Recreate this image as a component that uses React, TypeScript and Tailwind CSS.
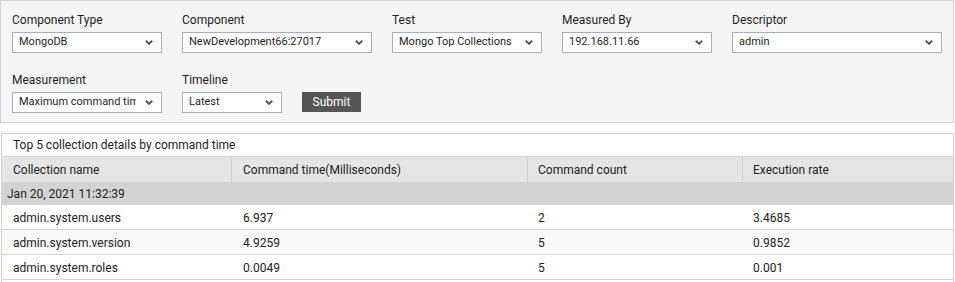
import React from "react";

const font = { fontFamily: "Roboto, 'Liberation Sans', sans-serif" };

function Chevron() {
  return (
    <svg width="8" height="5" viewBox="0 0 8 5" className="shrink-0">
      <path d="M0.8 0.8 L4 3.8 L7.2 0.8" fill="none" stroke="#555" strokeWidth="1.9" />
    </svg>
  );
}

function Select({ value, width }: { value: string; width: string }) {
  return (
    <div
      className={`${width} h-[21px] bg-white border border-[#a9afb9] flex items-center pl-[6px] pr-[8px] text-[11px] text-[#1e1e1e]`}
    >
      <div className="flex-1 min-w-0 overflow-hidden whitespace-nowrap mr-[9px]">{value}</div>
      <Chevron />
    </div>
  );
}

function Field({ label, value, width }: { label: string; value: string; width: string }) {
  return (
    <div className="flex flex-col mr-[20px]">
      <div className="h-[16px] leading-[16px] text-[12px] text-[#1e1e1e] mb-[4px]">{label}</div>
      <Select value={value} width={width} />
    </div>
  );
}

const rows = [
  ["admin.system.users", "6.937", "2", "3.4685"],
  ["admin.system.version", "4.9259", "5", "0.9852"],
  ["admin.system.roles", "0.0049", "5", "0.001"],
];

const cols = "grid grid-cols-[230px_296px_215px_1fr]";
const pads = ["pl-[11px]", "pl-[11px]", "pl-[10px]", "pl-[10px]"];

export default function App() {
  return (
    <div className="w-[955px] h-[282px] overflow-hidden bg-white text-[#222]" style={font}>
      <div className="w-[954px] h-[123px] border border-[#d4d4d4] bg-[#f5f5f5] pt-[11px] pl-[11px]">
        <div className="flex">
          <Field label="Component Type" value="MongoDB" width="w-[150px]" />
          <Field label="Component" value="NewDevelopment66:27017" width="w-[190px]" />
          <Field label="Test" value="Mongo Top Collections" width="w-[150px]" />
          <Field label="Measured By" value="192.168.11.66" width="w-[150px]" />
          <Field label="Descriptor" value="admin" width="w-[210px]" />
        </div>
        <div className="flex mt-[19px] items-end">
          <Field label="Measurement" value="Maximum command time" width="w-[150px]" />
          <Field label="Timeline" value="Latest" width="w-[100px]" />
          <button className="w-[59px] h-[20px] mb-[1px] bg-[#555555] text-white text-[12px] leading-[20px] text-center">
            Submit
          </button>
        </div>
      </div>

      <div className="ml-[1px] mt-[10px] w-[953px] border border-[#d2d2d2] text-[12px] text-[#222] pb-[10px]">
        <div className="h-[22px] leading-[22px] pl-[11px] bg-white">Top 5 collection details by command time</div>
        <div className={`${cols} h-[26px] bg-[#e5e5e5] border-t border-[#d6d6d6]`}>
          {["Collection name", "Command time(Milliseconds)", "Command count", "Execution rate"].map((h, i) => (
            <div
              key={h}
              className={`${pads[i]} pt-[1px] leading-[25px] ${i < 3 ? "border-r border-[#cfcfcf]" : ""}`}
            >
              {h}
            </div>
          ))}
        </div>
        <div className="h-[23px] leading-[23px] pt-[1px] bg-[#d3d3d3] pl-[5px]">Jan 20, 2021 11:32:39</div>
        {rows.map((r, ri) => (
          <div
            key={ri}
            className={`${cols} h-[25px] border-b border-[#d2d2d2] ${ri === 1 ? "bg-[#f9f9f9]" : "bg-white"}`}
          >
            {r.map((c, ci) => (
              <div key={ci} className={`${pads[ci]} pt-[1px] leading-[24px]`}>
                {c}
              </div>
            ))}
          </div>
        ))}
      </div>
    </div>
  );
}
